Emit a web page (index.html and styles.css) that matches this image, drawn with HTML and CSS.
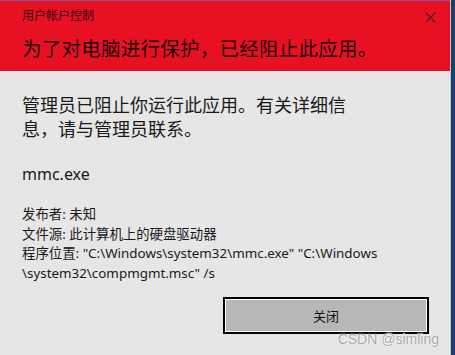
FILE: index.html
```html
<!DOCTYPE html>
<html lang="zh-CN">
<head>
<meta charset="utf-8">
<title>用户帐户控制</title>
<link rel="stylesheet" href="styles.css">
</head>
<body>
<div class="window">
  <div class="main">
    <div class="header">
      <div class="titlebar">
        <span class="title">用户帐户控制</span>
        <svg class="close" width="11" height="11" viewBox="0 0 11 11"><path d="M0.5 0.5 L10.5 10.5 M10.5 0.5 L0.5 10.5" stroke="#5a1a22" stroke-width="1.2" fill="none"/></svg>
      </div>
      <div class="heading">为了对电脑进行保护，已经阻止此应用。</div>
    </div>
    <div class="content">
      <div class="message">管理员已阻止你运行此应用。有关详细信<br>息，请与管理员联系。</div>
      <div class="app">mmc.exe</div>
      <div class="details">
        <div>发布者: 未知</div>
        <div>文件源: 此计算机上的硬盘驱动器</div>
        <div>程序位置: "C:\Windows\system32\mmc.exe" "C:\Windows<br>\system32\compmgmt.msc" /s</div>
      </div>
      <div class="actions">
        <button class="btn">关闭</button>
      </div>
    </div>
    <div class="watermark">CSDN @simling</div>
  </div>
  <div class="edge"></div>
</div>
</body>
</html>
```
FILE: styles.css
```css
html, body {
  margin: 0;
  padding: 0;
  background: #e6e6e6;
}
.window {
  width: 455px;
  height: 355px;
  display: flex;
  overflow: hidden;
  font-family: "Noto Sans", "Noto Sans CJK SC", sans-serif;
  color: #1a1a1a;
}
.main {
  position: relative;
  flex: 1;
  display: flex;
  flex-direction: column;
  background: #e6e6e6;
  border-right: 1px solid #b8c6d8;
}
.edge {
  width: 4px;
  background: #1c3f6e;
}
.header {
  background: #e81123;
  border-top: 1px solid #7b5a9c;
  padding: 7px 14px 8px 22px;
}
.titlebar {
  display: flex;
  justify-content: space-between;
  align-items: center;
  height: 16px;
}
.title {
  font-size: 12px;
  line-height: 16px;
  color: #2a0a0e;
}
.close {
  margin-top: 2px;
}
.heading {
  margin-top: 11px;
  font-size: 19.5px;
  line-height: 28px;
  color: #1a0508;
  letter-spacing: 0.25px;
}
.content {
  padding: 0 21px 0 22px;
  display: flex;
  flex-direction: column;
}
.message {
  margin-top: 22px;
  font-size: 18px;
  line-height: 24px;
}
.app {
  margin-top: 22px;
  font-size: 16px;
  line-height: 22px;
}
.details {
  margin-top: 20px;
  font-size: 13.4px;
  line-height: 19.5px;
}
.actions {
  margin-top: 14px;
  display: flex;
  justify-content: flex-end;
}
.btn {
  width: 206px;
  height: 37px;
  box-sizing: border-box;
  border: 2px solid #000;
  box-shadow: inset 0 0 0 1px #fff;
  background: #b7b7b7;
  font-family: "Noto Sans CJK SC", sans-serif;
  font-size: 13px;
  color: #111;
  padding: 0;
}
.watermark {
  position: absolute;
  right: 11px;
  bottom: 8px;
  font-family: "Liberation Sans", Arial, sans-serif;
  font-size: 14px;
  color: #a8a8a8;
  text-shadow: 0 0 2px #fff, 0 0 1px #fff;
}
```
